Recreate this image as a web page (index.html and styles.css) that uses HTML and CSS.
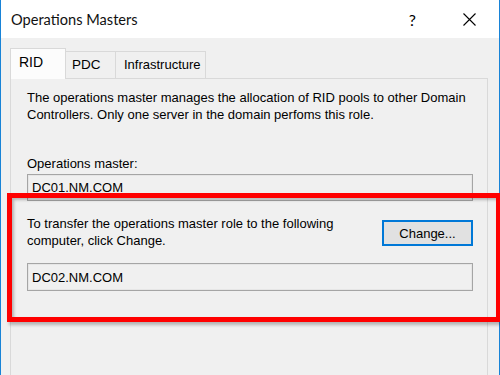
FILE: index.html
```html
<!DOCTYPE html>
<html>
<head>
<meta charset="utf-8">
<link rel="stylesheet" href="styles.css">
</head>
<body>
<div class="window">
  <div class="titlebar">
    <span class="title">Operations Masters</span>
    <span class="help">?</span>
    <svg class="close" width="13" height="13" viewBox="0 0 13 13"><path d="M0.5 0.5 L12.5 12.5 M12.5 0.5 L0.5 12.5" stroke="#000" stroke-width="1.1" fill="none"/></svg>
  </div>
  <div class="body">
    <div class="tabs">
      <div class="tab active">RID</div>
      <div class="tab pdc">PDC</div>
      <div class="tab infra">Infrastructure</div>
    </div>
    <div class="panel">
      <p class="desc">The operations master manages the allocation of RID pools to other Domain<br>Controllers. Only one server in the domain perfoms this role.</p>
      <div class="label">Operations master:</div>
      <div class="field">DC01.NM.COM</div>
      <div class="transfer">
        <p class="transfer-text">To transfer the operations master role to the following<br>computer, click Change.</p>
        <button class="btn">Change...</button>
      </div>
      <div class="field">DC02.NM.COM</div>
    </div>
  </div>
  <div class="highlight"></div>
</div>
</body>
</html>
```
FILE: styles.css
```css
* { box-sizing: border-box; }
html, body { margin: 0; padding: 0; }
body { width: 500px; height: 375px; overflow: hidden; background: #f0f0f0; }
.window {
  position: relative;
  width: 500px;
  height: 375px;
  display: flex;
  flex-direction: column;
  border-left: 1px solid #1883d7;
  border-right: 1px solid #1883d7;
  background: #f0f0f0;
  font-family: "Liberation Sans", Arial, sans-serif;
  color: #000;
}
.titlebar {
  height: 38px;
  background: #fff;
  display: flex;
  align-items: center;
  padding-left: 10px;
  flex: none;
}
.title {
  font-family: Lato, "Noto Sans", sans-serif;
  font-size: 14.6px;
  flex: 1;
  color: #111;
}
.help {
  font-family: Lato, sans-serif;
  font-size: 16px;
  margin-right: 47px;
}
.close { margin-right: 23px; }
.body {
  flex: 1;
  padding: 10px 11px 0 9px;
  display: flex;
  flex-direction: column;
}
.tabs {
  display: flex;
  align-items: flex-end;
  height: 30px;
  position: relative;
  z-index: 1;
}
.tab {
  height: 27px;
  border: 1px solid #d9d9d9;
  border-bottom: none;
  background: #f0f0f0;
  font-size: 13.5px;
  padding: 5px 0 0 6px;
  margin-left: -1px;
}
.tab.pdc { width: 51px; padding-left: 6px; }
.tab.infra { width: 91px; padding-left: 8px; font-size: 13px; }
.tab.active {
  width: 56px;
  height: 31px;
  margin-bottom: -1px;
  background: #fcfcfc;
  padding: 5px 0 0 8px;
  margin-left: 0;
  font-size: 14px;
}
.panel {
  flex: 1;
  border: 1px solid #d9d9d9;
  border-bottom: none;
  padding: 10px 14px 0 16px;
  font-size: 13px;
  line-height: 17px;
}
.desc { margin: 0; white-space: nowrap; }
.label { margin-top: 32px; }
.field {
  margin-top: 2px;
  height: 27px;
  border: 1px solid #a5a5a5;
  box-shadow: inset 0 0 0 1px #e6e6e6;
  background: #f0f0f0;
  display: flex;
  align-items: center;
  padding-left: 4px;
  font-size: 13px;
}
.transfer {
  display: flex;
  align-items: flex-start;
  margin-top: 14px;
  margin-bottom: 14px;
}
.transfer-text { margin: 0; flex: 1; white-space: nowrap; }
.btn {
  margin-top: 5px;
  width: 91px;
  height: 26px;
  border: 2px solid #0078d7;
  background: #e1e1e1;
  font-family: "Liberation Sans", Arial, sans-serif;
  font-size: 13px;
  padding: 0;
  color: #000;
}
.transfer + .field { margin-top: 0; height: 28px; }
.highlight {
  position: absolute;
  left: 6px;
  top: 193px;
  width: 494px;
  height: 129px;
  border: 5px solid #ff0000;
  box-shadow: 2px 3px 3px rgba(0,0,0,0.25), inset 2px 2px 3px rgba(0,0,0,0.25);
}
```
